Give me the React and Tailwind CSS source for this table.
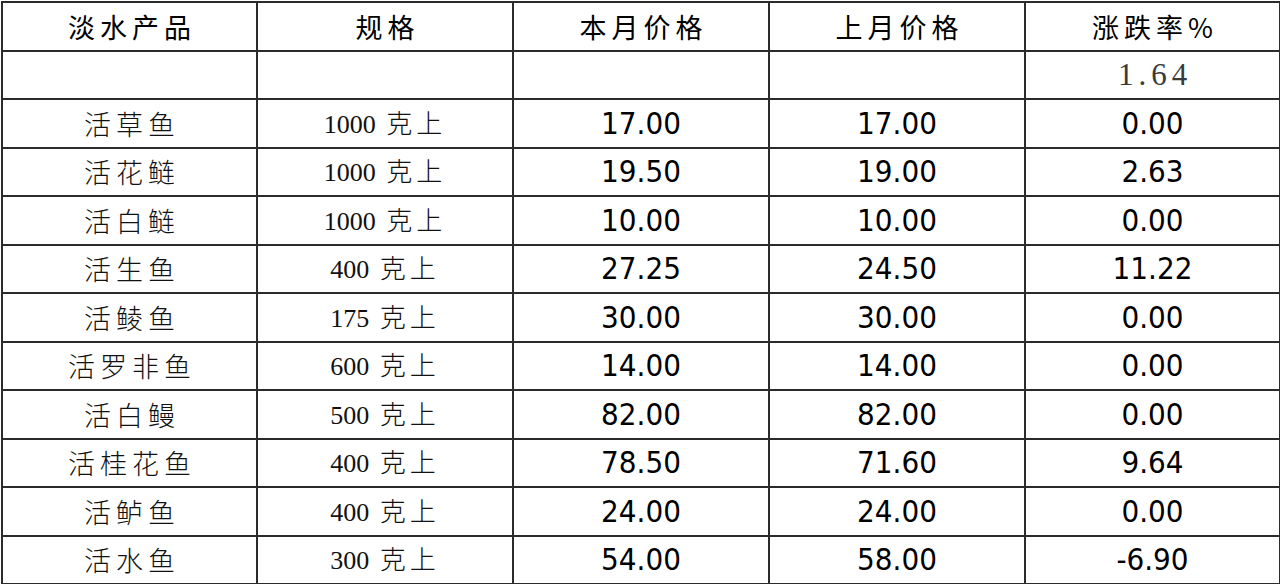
import React from "react";

const rows = [
  ["活草鱼", "1000", "17.00", "17.00", "0.00"],
  ["活花鲢", "1000", "19.50", "19.00", "2.63"],
  ["活白鲢", "1000", "10.00", "10.00", "0.00"],
  ["活生鱼", "400", "27.25", "24.50", "11.22"],
  ["活鲮鱼", "175", "30.00", "30.00", "0.00"],
  ["活罗非鱼", "600", "14.00", "14.00", "0.00"],
  ["活白鳗", "500", "82.00", "82.00", "0.00"],
  ["活桂花鱼", "400", "78.50", "71.60", "9.64"],
  ["活鲈鱼", "400", "24.00", "24.00", "0.00"],
  ["活水鱼", "300", "54.00", "58.00", "-6.90"],
];

const cjkSans = { fontFamily: '"Noto Sans CJK SC", sans-serif' };
const specFont = { fontFamily: '"Liberation Serif", "Noto Sans CJK SC", serif' };
const numFont = { fontFamily: '"DejaVu Sans Condensed", "DejaVu Sans", sans-serif' };

const cell = "border-2 border-[#2b2b2b] p-0 text-center align-middle";

export default function App() {
  return (
    <div className="w-[1280px] h-[584px] bg-white overflow-hidden">
      <table className="border-collapse table-fixed w-[1278px] ml-px mt-px">
        <colgroup>
          <col className="w-[255px]" />
          <col className="w-[256px]" />
          <col className="w-[256px]" />
          <col className="w-[256px]" />
          <col className="w-[255px]" />
        </colgroup>
        <tbody>
          <tr className="h-[48.5px]">
            {["淡水产品", "规格", "本月价格", "上月价格", "涨跌率%"].map((h) => (
              <td
                key={h}
                className={`${cell} text-[27px] leading-none tracking-[5px] text-black`}
                style={cjkSans}
              >
                <span className="pl-[5px]">{h}</span>
              </td>
            ))}
          </tr>
          <tr className="h-[48.5px]">
            <td className={cell}></td>
            <td className={cell}></td>
            <td className={cell}></td>
            <td className={cell}></td>
            <td
              className={`${cell} text-[31px] leading-none tracking-[5px] text-[#3a3a3a]`}
              style={specFont}
            >
              <span className="pl-[5px]">1.64</span>
            </td>
          </tr>
          {rows.map((r) => (
            <tr key={r[0]} className="h-[48.5px]">
              <td
                className={`${cell} text-[27px] leading-none tracking-[5px] font-light text-[#111]`}
                style={cjkSans}
              >
                <span className="pl-[5px]">{r[0]}</span>
              </td>
              <td
                className={`${cell} text-[26px] leading-none text-[#111]`}
                style={specFont}
              >
                {r[1]}{" "}
                <span className="font-light tracking-[4px]" style={cjkSans}>
                  <span className="pl-[4px]">克上</span>
                </span>
              </td>
              <td className={`${cell} text-[31px] leading-none text-black`} style={numFont}>
                {r[2]}
              </td>
              <td className={`${cell} text-[31px] leading-none text-black`} style={numFont}>
                {r[3]}
              </td>
              <td className={`${cell} text-[31px] leading-none text-black`} style={numFont}>
                {r[4]}
              </td>
            </tr>
          ))}
        </tbody>
      </table>
    </div>
  );
}
